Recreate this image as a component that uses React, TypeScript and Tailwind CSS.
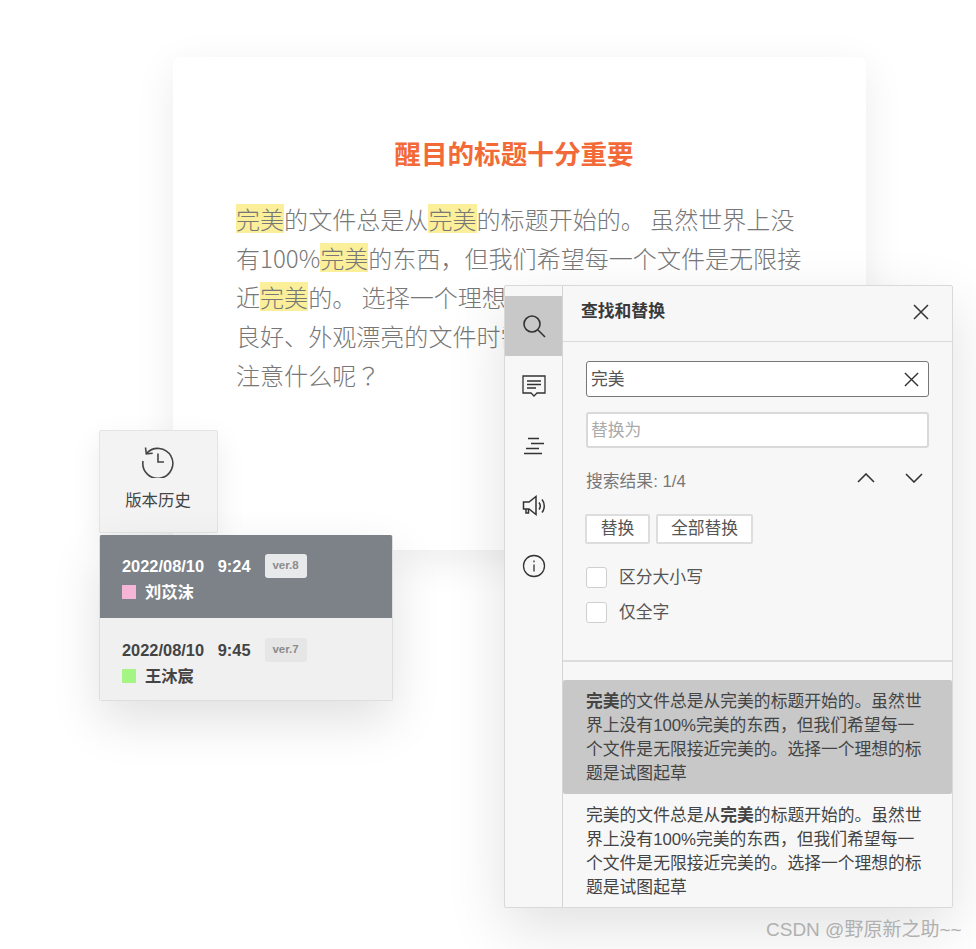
import * as React from "react";

const Mark = ({ children }: { children: React.ReactNode }) => (
  <span className="inline-block h-[29px] bg-[#fbef9a] leading-[29px] align-baseline">{children}</span>
);

const ResultBlock = ({ active, boldSecond }: { active?: boolean; boldSecond?: boolean }) => (
  <div className={`pb-[8px] pl-[23px] pr-[24px] pt-[10px] text-[16.8px] leading-[24px] text-[#444] ${active ? "rounded-[2px] bg-[#c8c8c8]" : ""}`}>
    {boldSecond ? "完美" : <b>完美</b>}
    的文件总是从
    {boldSecond ? <b>完美</b> : "完美"}
    的标题开始的。虽然世界上没有100%完美的东西，但我们希望每一个文件是无限接近完美的。选择一个理想的标题是试图起草
  </div>
);

const VersionRow = ({
  time,
  ver,
  name,
  swatch,
  active,
}: {
  time: string;
  ver: string;
  name: string;
  swatch: string;
  active?: boolean;
}) => (
  <div className={`flex flex-col pl-[22px] font-bold ${active ? "h-[83px] bg-[#7c8287] pt-[19px] text-white" : "h-[82px] bg-[#f0f0f0] pt-[20px] text-[#444]"}`}>
    <div className="flex h-[24px] items-center text-[16.4px]">
      <span className="whitespace-pre">{time}</span>
      <span className={`ml-[14px] flex h-[24px] w-[42px] items-center justify-center rounded-[3px] text-[11.5px] text-[#8c8c8c] ${active ? "bg-[#e8e9ea]" : "bg-[#e6e6e6]"}`}>
        {ver}
      </span>
    </div>
    <div className="mt-[1px] flex h-[26px] items-center text-[16.3px]">
      <span className={`mr-[9px] h-[14px] w-[14px] ${swatch}`} />
      {name}
    </div>
  </div>
);

const SideIcon = ({ active, children }: { active?: boolean; children: React.ReactNode }) => (
  <div className={`flex h-[60px] items-center justify-center ${active ? "bg-[#c8c8c8]" : ""}`}>{children}</div>
);

const CloseIcon = ({ size }: { size: number }) => (
  <svg width={size} height={size} viewBox="0 0 16 16" fill="none" stroke="#333" strokeWidth="1.5">
    <path d="M1 1l14 14M15 1L1 15" />
  </svg>
);

const Check = ({ label }: { label: string }) => (
  <div className="flex h-[21px] items-center text-[16.8px] text-[#555]">
    <span className="mr-[12px] h-[21px] w-[21px] rounded-[3px] border border-[#cfcfcf] bg-white" />
    {label}
  </div>
);

export default function App() {
  return (
    <div className="relative h-[949px] w-[976px] overflow-hidden bg-white font-['Liberation_Sans','Noto_Sans_CJK_SC',sans-serif]">
      {/* document card */}
      <div className="absolute left-[173px] top-[57px] h-[493px] w-[693px] rounded-[8px] bg-white pl-[63px] pt-[79px] shadow-[0_10px_40px_rgba(0,0,0,0.08)]">
        <h1 className="w-[556px] text-center text-[26.6px] font-bold leading-[38px] text-[#f26a38]">醒目的标题十分重要</h1>
        <div className="mt-[25px] whitespace-nowrap font-['Noto_Sans_CJK_SC',sans-serif] text-[24.05px] font-light leading-[39px] text-[#777]">
          <div>
            <Mark>完美</Mark>的文件总是从<Mark>完美</Mark>的标题开始的。 虽然世界上没
          </div>
          <div>
            有100%<Mark>完美</Mark>的东西，但我们希望每一个文件是无限接
          </div>
          <div>
            近<Mark>完美</Mark>的。 选择一个理想的标题是试图起草
          </div>
          <div>良好、外观漂亮的文件时需要</div>
          <div>
            注意什么呢<span className="font-['Noto_Sans_CJK_TC',sans-serif]">？</span>
          </div>
        </div>
      </div>

      {/* version history */}
      <div className="absolute left-[99px] top-[430px] flex h-[103px] w-[119px] flex-col items-center rounded-[2px] border border-[#e4e4e4] bg-[#f3f3f3] pr-[1px] pt-[13px] text-[16.4px] text-[#444] shadow-[0_10px_30px_rgba(0,0,0,0.08)]">
        <svg width="34" height="34" viewBox="0 0 34 34" fill="none" stroke="#444" strokeWidth="1.6">
          <path d="M5.500 9.500A15 15 0 1 1 2 17" />
          <path d="M4.500 3.500l.8 6.400 6.400-.6" />
          <path d="M17 9.500v8.500h6" />
        </svg>
        <div className="mt-[10px] leading-[24px]">版本历史</div>
      </div>
      <div className="absolute left-[99px] top-[535px] w-[294px] overflow-hidden rounded-[2px] border-b border-l border-r border-[#dedede] shadow-[0_20px_50px_rgba(0,0,0,0.12)]">
        <VersionRow time="2022/08/10   9:24" ver="ver.8" name="刘苡沫" swatch="bg-[#f5b5d6]" active />
        <VersionRow time="2022/08/10   9:45" ver="ver.7" name="王沐宸" swatch="bg-[#a5f584]" />
      </div>

      {/* find and replace panel */}
      <div className="absolute left-[504px] top-[285px] flex h-[623px] w-[449px] rounded-[2px] border border-[#d9d9d9] bg-[#f7f7f7] shadow-[0_20px_60px_rgba(0,0,0,0.12)]">
        <div className="w-[58px] border-r border-[#d4d4d4] pt-[10px]">
          <SideIcon active>
            <svg width="24" height="24" viewBox="0 0 24 24" fill="none" stroke="#333" strokeWidth="1.6">
              <circle cx="10" cy="10" r="8" />
              <path d="M16 16l7 7" />
            </svg>
          </SideIcon>
          <SideIcon>
            <svg width="26" height="24" viewBox="0 0 26 24" fill="none" stroke="#333" strokeWidth="1.3">
              <path d="M2 2h22v17h-8l-3 3-3-3H2z" />
              <path d="M6 7h14M6 10.500h14M6 14h9" />
            </svg>
          </SideIcon>
          <SideIcon>
            <svg width="22" height="18" viewBox="0 0 22 18" fill="none" stroke="#333" strokeWidth="1.3">
              <path d="M5 1.500h11M8 6.500h13M3 11.500h13M1 16.500h18" />
            </svg>
          </SideIcon>
          <SideIcon>
            <svg width="24" height="22" viewBox="0 0 24 22" fill="none" stroke="#333" strokeWidth="1.5">
              <path d="M1.500 7h5.500l7-5.500v18l-7-5.500h-5.500z" />
              <path d="M4 14v4h2.500v-4" />
              <path d="M17 7.500c1.500 2 1.500 5 0 7M20 4.500c3 3.500 3 9.500 0 13" />
            </svg>
          </SideIcon>
          <SideIcon>
            <svg width="24" height="24" viewBox="0 0 24 24" fill="none" stroke="#333" strokeWidth="1.3">
              <circle cx="12" cy="12" r="10.500" />
              <path d="M12 10.500v7" />
              <path d="M12 6.500v1.800" />
            </svg>
          </SideIcon>
        </div>

        <div className="flex min-w-0 flex-1 flex-col">
          <div className="flex h-[56px] shrink-0 items-center justify-between border-b border-[#d9d9d9] pb-[3px] pl-[18px] pr-[23px]">
            <span className="text-[16.8px] font-bold text-[#3a3a3a]">查找和替换</span>
            <CloseIcon size={16} />
          </div>

          <div className="px-[23px] pt-[19px]">
            <div className="flex h-[36px] items-center justify-between rounded-[3px] border border-[#777] bg-white pl-[4px] pr-[9px] text-[16.8px] text-[#555]">
              <span className="pt-[2px]">完美</span>
              <CloseIcon size={15} />
            </div>
            <div className="mt-[15px] flex h-[36px] items-center rounded-[3px] border-2 border-[#d9d9d9] bg-white pl-[3px] pt-[2px] text-[16.8px] text-[#aaa]">
              替换为
            </div>
            <div className="mt-[20px] flex h-[28px] items-center justify-between pr-[6px] text-[16.8px] text-[#777]">
              <span>搜索结果: 1/4</span>
              <div className="mb-[8px] flex gap-[30px]">
                <svg width="18" height="10" viewBox="0 0 18 10" fill="none" stroke="#333" strokeWidth="1.6">
                  <path d="M1 9l8-8 8 8" />
                </svg>
                <svg width="18" height="10" viewBox="0 0 18 10" fill="none" stroke="#333" strokeWidth="1.6">
                  <path d="M1 1l8 8 8-8" />
                </svg>
              </div>
            </div>
            <div className="-ml-[1px] mt-[18px] flex gap-[6px] text-[16.8px] text-[#555]">
              <button className="h-[30px] w-[65px] rounded-[2px] border-2 border-[#ddd] bg-white">替换</button>
              <button className="h-[30px] w-[97px] rounded-[2px] border-2 border-[#ddd] bg-white">全部替换</button>
            </div>
            <div className="mt-[23px] flex flex-col gap-[14px]">
              <Check label="区分大小写" />
              <Check label="仅全字" />
            </div>
          </div>

          <div className="mt-[37px] border-t-2 border-[#dcdcdc] pt-[18px]">
            <ResultBlock active />
            <ResultBlock boldSecond />
          </div>
        </div>
      </div>

      <div className="absolute left-[766px] top-[918px] whitespace-nowrap text-[19px] leading-[24px] text-[#b0b0b0]">CSDN @野原新之助~~</div>
    </div>
  );
}
